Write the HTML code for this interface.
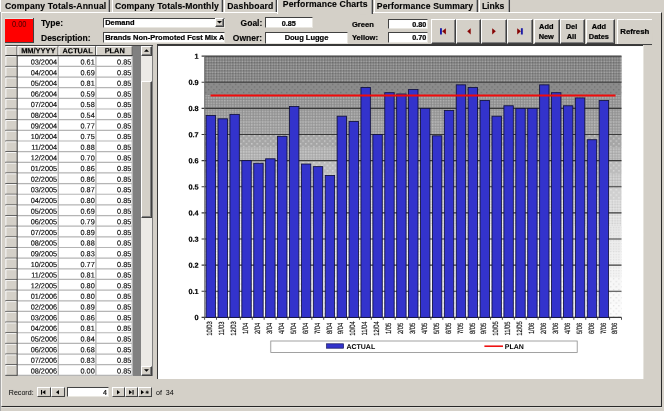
<!DOCTYPE html>
<html><head><meta charset="utf-8"><title>Performance Charts</title>
<style>
html,body{margin:0;padding:0;}
body{width:664px;height:411px;overflow:hidden;background:#d4d0c8;position:relative;font-family:"Liberation Sans",Arial,sans-serif;color:#000;}
.a{position:absolute;box-sizing:border-box;white-space:nowrap;}
.b{font-weight:bold;}
.btn,.fld,.lbl2{-webkit-text-stroke:0.22px #000;}
.lbl,.tab{-webkit-text-stroke:0.12px #000;}
.tab{position:absolute;box-sizing:border-box;top:-2px;height:14px;border-left:1px solid #fff;border-right:1px solid #404040;box-shadow:inset -1px 0 0 #a0a0a0;font-weight:bold;font-size:8.6px;letter-spacing:0.12px;line-height:10px;white-space:nowrap;}
.tab span{position:absolute;top:2.8px;}
.fld{position:absolute;box-sizing:border-box;background:#fff;border-top:1px solid #404040;border-left:1px solid #404040;border-bottom:1px solid #e8e6e0;border-right:1px solid #e8e6e0;font-weight:bold;font-size:7.45px;line-height:9px;white-space:nowrap;overflow:hidden;}
.btn{position:absolute;box-sizing:border-box;background:#d4d0c8;border-top:1px solid #fff;border-left:1px solid #fff;border-bottom:1px solid #404040;border-right:1px solid #404040;box-shadow:inset -1px -1px 0 #808080;font-weight:bold;font-size:7.4px;line-height:9.4px;text-align:center;white-space:nowrap;}
  .lbl{position:absolute;font-weight:bold;font-size:8.5px;line-height:10px;white-space:nowrap;}
.lbl2{position:absolute;font-weight:bold;font-size:7.55px;line-height:10px;white-space:nowrap;}
.hd{position:absolute;box-sizing:border-box;background:#d4d0c8;border-top:1px solid #fff;border-left:1px solid #fff;border-bottom:1px solid #404040;border-right:1px solid #808080;font-weight:bold;font-size:7.2px;line-height:8px;text-align:center;}
.c{position:absolute;box-sizing:border-box;background:#fff;border-right:1px solid #c0c0c0;border-bottom:1px solid #c0c0c0;font-size:7.1px;line-height:9.6px;text-align:right;padding-right:1px;color:#222;}
.rs{position:absolute;box-sizing:border-box;background:#d4d0c8;border-top:1px solid #fff;border-left:1px solid #fff;border-bottom:1px solid #808080;border-right:1px solid #404040;}
.nb{position:absolute;box-sizing:border-box;background:#d4d0c8;border-top:1px solid #fff;border-left:1px solid #fff;border-bottom:1px solid #404040;border-right:1px solid #404040;}
svg{position:absolute;overflow:visible;text-rendering:geometricPrecision;}
#r{position:absolute;left:0;top:0;width:664px;height:411px;transform:rotate(0.004deg);transform-origin:332px 205px;will-change:transform;}
</style></head><body><div id="r">

<div class="a" style="left:0;top:0;width:0.9px;height:411px;background:#a6a6a6;"></div>
<div class="a" style="left:0.8px;top:11.7px;width:661.3px;height:395.5px;border-top:1px solid #fff;border-left:1px solid #f4f2ee;border-right:1px solid #262626;border-bottom:1px solid #262626;"></div>
<div class="a" style="left:1px;top:407.4px;width:661px;height:1px;background:#e2e0da;"></div>
<div class="tab" style="left:0px;width:110px;letter-spacing:0.15px;"><span style="left:4.0px;">Company Totals-Annual</span></div>
<div class="tab" style="left:111.5px;width:111px;letter-spacing:0.08px;"><span style="left:2.5px;">Company Totals-Monthly</span></div>
<div class="tab" style="left:224px;width:53px;letter-spacing:0.16px;"><span style="left:2.2px;">Dashboard</span></div>
<div class="tab" style="left:277px;width:96px;top:-4px;height:18px;background:#d4d0c8;z-index:3;letter-spacing:0.15px;"><span style="left:4.8px;top:2.7px;">Performance Charts</span></div>
<div class="tab" style="left:374px;width:103.5px;letter-spacing:0.12px;"><span style="left:1.8px;">Performance Summary</span></div>
<div class="tab" style="left:479px;width:30.5px;letter-spacing:-0.02px;"><span style="left:1.9px;">Links</span></div>
<div class="a" style="left:4.8px;top:18.3px;width:29.5px;height:24.9px;background:#404040;"></div>
<div class="a" style="left:4.8px;top:18.3px;width:28.2px;height:23.7px;background:#ff0000;border-top:1px solid #dcecea;"></div>
<div class="a" style="left:4.8px;top:18.9px;width:28.4px;text-align:center;font-size:9.1px;line-height:10px;color:#480000;transform:scaleX(0.82);">0.00</div>
<div class="lbl" style="left:41px;top:17.6px;">Type:</div>
<div class="lbl" style="left:41px;top:32.6px;">Description:</div>
<div class="lbl" style="left:240.6px;top:17.6px;">Goal:</div>
<div class="lbl" style="left:232.8px;top:32.8px;">Owner:</div>
<div class="lbl2" style="left:352px;top:20.1px;">Green</div>
<div class="lbl2" style="left:352px;top:33.3px;">Yellow:</div>
<div class="fld" style="left:103px;top:17.5px;width:122px;height:10px;padding-left:1.2px;line-height:7.4px;">Demand</div>
<div class="btn" style="left:214.6px;top:18.2px;width:9.8px;height:8.8px;"></div>
<svg style="left:217px;top:21.2px" width="5" height="3" viewBox="0 0 5 3"><path d="M0 0H5L2.5 2.6Z" fill="#000"/></svg>
<div class="fld" style="left:103px;top:32px;width:122px;height:11px;padding-left:1.2px;line-height:9px;font-size:7.5px;">Brands Non-Promoted Fcst Mix A</div>
<div class="fld" style="left:265px;top:17.4px;width:47.6px;height:11px;text-align:center;font-size:7.2px;padding-top:0.4px;">0.85</div>
<div class="fld" style="left:265px;top:32px;width:83px;height:11.5px;text-align:center;font-size:7.5px;padding-top:0.2px;">Doug Lugge</div>
<div class="fld" style="left:388px;top:18.5px;width:40.3px;height:10.4px;text-align:right;font-size:7.2px;padding-right:1px;padding-top:0.2px;">0.80</div>
<div class="fld" style="left:388px;top:32.4px;width:40.3px;height:10.8px;text-align:right;font-size:7.2px;padding-right:1px;padding-top:0px;">0.70</div>
<div class="btn" style="left:431px;top:18.6px;width:25px;height:25.6px;"></div>
<div class="btn" style="left:456px;top:18.6px;width:25px;height:25.6px;"></div>
<div class="btn" style="left:481px;top:18.6px;width:26px;height:25.6px;"></div>
<div class="btn" style="left:507px;top:18.6px;width:25.5px;height:25.6px;"></div>
<svg style="left:440.4px;top:28px" width="7" height="7" viewBox="0 0 7 7"><rect x="0" y="0.2" width="1.9" height="6.3" fill="#1a1aa6"/><path d="M5.9 0.3V6.4L2.1 3.35Z" fill="#860404"/></svg>
<svg style="left:466.6px;top:28px" width="5" height="7" viewBox="0 0 5 7"><path d="M3.7 0.3V6.4L0.2 3.35Z" fill="#860404"/></svg>
<svg style="left:492.4px;top:28px" width="5" height="7" viewBox="0 0 5 7"><path d="M0.2 0.3V6.4L3.8 3.35Z" fill="#860404"/></svg>
<svg style="left:517.2px;top:28px" width="7" height="7" viewBox="0 0 7 7"><path d="M0.2 0.3V6.4L3.9 3.35Z" fill="#860404"/><rect x="3.9" y="0.2" width="1.9" height="6.3" fill="#1a1aa6"/></svg>
<div class="btn" style="left:534px;top:18.6px;width:25.5px;height:25.6px;padding-top:2.5px;padding-right:1px;">Add<br>New</div>
<div class="btn" style="left:560px;top:18.6px;width:25px;height:25.6px;padding-top:2.5px;padding-right:2px;">Del<br>All</div>
<div class="btn" style="left:586px;top:18.6px;width:28.8px;height:25.6px;padding-top:2.5px;padding-right:3px;">Add<br>Dates</div>
<div class="btn" style="left:616.6px;top:18.6px;width:35.4px;height:26.2px;padding-top:7.6px;font-size:7.8px;border-right:none;box-shadow:none;">Refresh</div>
<div class="a" style="left:4.6px;top:45.0px;width:148px;height:331.4px;background:#808080;border-top:1px solid #404040;border-left:1px solid #808080;"></div>
<svg style="left:0;top:0" width="160" height="380" viewBox="0 0 160 380" font-family="Liberation Sans, Arial, sans-serif">
<rect x="5.4" y="46.0" width="127.20" height="329.80" fill="#fff"/>
<rect x="5.4" y="46.0" width="12" height="329.80" fill="#d4d0c8"/>
<rect x="5.4" y="46.0" width="127.20" height="10.00" fill="#d4d0c8"/>
<path d="M5.9 55.5V46.5H16.9" fill="none" stroke="#fff" stroke-width="1"/>
<path d="M17.0 46.3V55.5" fill="none" stroke="#484848" stroke-width="1"/>
<path d="M17.9 55.5V46.5H57.9" fill="none" stroke="#fff" stroke-width="1"/>
<path d="M58.0 46.3V55.5" fill="none" stroke="#484848" stroke-width="1"/>
<path d="M58.9 55.5V46.5H95.5" fill="none" stroke="#fff" stroke-width="1"/>
<path d="M95.6 46.3V55.5" fill="none" stroke="#484848" stroke-width="1"/>
<path d="M96.5 55.5V46.5H132.1" fill="none" stroke="#fff" stroke-width="1"/>
<path d="M132.2 46.3V55.5" fill="none" stroke="#484848" stroke-width="1"/>
<line x1="5.4" y1="55.7" x2="132.6" y2="55.7" stroke="#303030" stroke-width="1.2"/>
<text transform="translate(38.30 53.2) rotate(0.03)" font-size="7.45" font-weight="bold" stroke="#000" stroke-width="0.15" text-anchor="middle">MM/YYYY</text>
<text transform="translate(77.60 53.2) rotate(0.03)" font-size="7.3" font-weight="bold" stroke="#000" stroke-width="0.15" text-anchor="middle">ACTUAL</text>
<text transform="translate(114.70 53.2) rotate(0.03)" font-size="7.4" font-weight="bold" stroke="#000" stroke-width="0.15" text-anchor="middle">PLAN</text>
<path d="M5.9 66.05V56.60H16.6" fill="none" stroke="#fff" stroke-width="0.9"/>
<line x1="5.4" y1="66.40" x2="17.4" y2="66.40" stroke="#4c4c4c" stroke-width="1"/>
<line x1="17.8" y1="66.40" x2="132.6" y2="66.40" stroke="#b4b4b4" stroke-width="1.2"/>
<text transform="translate(57.10 64.50) rotate(0.03)" font-size="7.3" fill="#000" stroke="#000" stroke-width="0.12" text-anchor="end">03/2004</text>
<text transform="translate(94.70 64.50) rotate(0.03)" font-size="7.3" fill="#000" stroke="#000" stroke-width="0.12" text-anchor="end">0.61</text>
<text transform="translate(131.30 64.50) rotate(0.03)" font-size="7.3" fill="#000" stroke="#000" stroke-width="0.12" text-anchor="end">0.85</text>
<path d="M5.9 76.71V67.25H16.6" fill="none" stroke="#fff" stroke-width="0.9"/>
<line x1="5.4" y1="77.06" x2="17.4" y2="77.06" stroke="#4c4c4c" stroke-width="1"/>
<line x1="17.8" y1="77.06" x2="132.6" y2="77.06" stroke="#b4b4b4" stroke-width="1.2"/>
<text transform="translate(57.10 75.15) rotate(0.03)" font-size="7.3" fill="#000" stroke="#000" stroke-width="0.12" text-anchor="end">04/2004</text>
<text transform="translate(94.70 75.15) rotate(0.03)" font-size="7.3" fill="#000" stroke="#000" stroke-width="0.12" text-anchor="end">0.69</text>
<text transform="translate(131.30 75.15) rotate(0.03)" font-size="7.3" fill="#000" stroke="#000" stroke-width="0.12" text-anchor="end">0.85</text>
<path d="M5.9 87.36V77.91H16.6" fill="none" stroke="#fff" stroke-width="0.9"/>
<line x1="5.4" y1="87.71" x2="17.4" y2="87.71" stroke="#4c4c4c" stroke-width="1"/>
<line x1="17.8" y1="87.71" x2="132.6" y2="87.71" stroke="#b4b4b4" stroke-width="1.2"/>
<text transform="translate(57.10 85.81) rotate(0.03)" font-size="7.3" fill="#000" stroke="#000" stroke-width="0.12" text-anchor="end">05/2004</text>
<text transform="translate(94.70 85.81) rotate(0.03)" font-size="7.3" fill="#000" stroke="#000" stroke-width="0.12" text-anchor="end">0.81</text>
<text transform="translate(131.30 85.81) rotate(0.03)" font-size="7.3" fill="#000" stroke="#000" stroke-width="0.12" text-anchor="end">0.85</text>
<path d="M5.9 98.01V88.56H16.6" fill="none" stroke="#fff" stroke-width="0.9"/>
<line x1="5.4" y1="98.36" x2="17.4" y2="98.36" stroke="#4c4c4c" stroke-width="1"/>
<line x1="17.8" y1="98.36" x2="132.6" y2="98.36" stroke="#b4b4b4" stroke-width="1.2"/>
<text transform="translate(57.10 96.46) rotate(0.03)" font-size="7.3" fill="#000" stroke="#000" stroke-width="0.12" text-anchor="end">06/2004</text>
<text transform="translate(94.70 96.46) rotate(0.03)" font-size="7.3" fill="#000" stroke="#000" stroke-width="0.12" text-anchor="end">0.59</text>
<text transform="translate(131.30 96.46) rotate(0.03)" font-size="7.3" fill="#000" stroke="#000" stroke-width="0.12" text-anchor="end">0.85</text>
<path d="M5.9 108.67V99.21H16.6" fill="none" stroke="#fff" stroke-width="0.9"/>
<line x1="5.4" y1="109.02" x2="17.4" y2="109.02" stroke="#4c4c4c" stroke-width="1"/>
<line x1="17.8" y1="109.02" x2="132.6" y2="109.02" stroke="#b4b4b4" stroke-width="1.2"/>
<text transform="translate(57.10 107.11) rotate(0.03)" font-size="7.3" fill="#000" stroke="#000" stroke-width="0.12" text-anchor="end">07/2004</text>
<text transform="translate(94.70 107.11) rotate(0.03)" font-size="7.3" fill="#000" stroke="#000" stroke-width="0.12" text-anchor="end">0.58</text>
<text transform="translate(131.30 107.11) rotate(0.03)" font-size="7.3" fill="#000" stroke="#000" stroke-width="0.12" text-anchor="end">0.85</text>
<path d="M5.9 119.32V109.87H16.6" fill="none" stroke="#fff" stroke-width="0.9"/>
<line x1="5.4" y1="119.67" x2="17.4" y2="119.67" stroke="#4c4c4c" stroke-width="1"/>
<line x1="17.8" y1="119.67" x2="132.6" y2="119.67" stroke="#b4b4b4" stroke-width="1.2"/>
<text transform="translate(57.10 117.77) rotate(0.03)" font-size="7.3" fill="#000" stroke="#000" stroke-width="0.12" text-anchor="end">08/2004</text>
<text transform="translate(94.70 117.77) rotate(0.03)" font-size="7.3" fill="#000" stroke="#000" stroke-width="0.12" text-anchor="end">0.54</text>
<text transform="translate(131.30 117.77) rotate(0.03)" font-size="7.3" fill="#000" stroke="#000" stroke-width="0.12" text-anchor="end">0.85</text>
<path d="M5.9 129.97V120.52H16.6" fill="none" stroke="#fff" stroke-width="0.9"/>
<line x1="5.4" y1="130.32" x2="17.4" y2="130.32" stroke="#4c4c4c" stroke-width="1"/>
<line x1="17.8" y1="130.32" x2="132.6" y2="130.32" stroke="#b4b4b4" stroke-width="1.2"/>
<text transform="translate(57.10 128.42) rotate(0.03)" font-size="7.3" fill="#000" stroke="#000" stroke-width="0.12" text-anchor="end">09/2004</text>
<text transform="translate(94.70 128.42) rotate(0.03)" font-size="7.3" fill="#000" stroke="#000" stroke-width="0.12" text-anchor="end">0.77</text>
<text transform="translate(131.30 128.42) rotate(0.03)" font-size="7.3" fill="#000" stroke="#000" stroke-width="0.12" text-anchor="end">0.85</text>
<path d="M5.9 140.63V131.17H16.6" fill="none" stroke="#fff" stroke-width="0.9"/>
<line x1="5.4" y1="140.98" x2="17.4" y2="140.98" stroke="#4c4c4c" stroke-width="1"/>
<line x1="17.8" y1="140.98" x2="132.6" y2="140.98" stroke="#b4b4b4" stroke-width="1.2"/>
<text transform="translate(57.10 139.07) rotate(0.03)" font-size="7.3" fill="#000" stroke="#000" stroke-width="0.12" text-anchor="end">10/2004</text>
<text transform="translate(94.70 139.07) rotate(0.03)" font-size="7.3" fill="#000" stroke="#000" stroke-width="0.12" text-anchor="end">0.75</text>
<text transform="translate(131.30 139.07) rotate(0.03)" font-size="7.3" fill="#000" stroke="#000" stroke-width="0.12" text-anchor="end">0.85</text>
<path d="M5.9 151.28V141.83H16.6" fill="none" stroke="#fff" stroke-width="0.9"/>
<line x1="5.4" y1="151.63" x2="17.4" y2="151.63" stroke="#4c4c4c" stroke-width="1"/>
<line x1="17.8" y1="151.63" x2="132.6" y2="151.63" stroke="#b4b4b4" stroke-width="1.2"/>
<text transform="translate(57.10 149.73) rotate(0.03)" font-size="7.3" fill="#000" stroke="#000" stroke-width="0.12" text-anchor="end">11/2004</text>
<text transform="translate(94.70 149.73) rotate(0.03)" font-size="7.3" fill="#000" stroke="#000" stroke-width="0.12" text-anchor="end">0.88</text>
<text transform="translate(131.30 149.73) rotate(0.03)" font-size="7.3" fill="#000" stroke="#000" stroke-width="0.12" text-anchor="end">0.85</text>
<path d="M5.9 161.93V152.48H16.6" fill="none" stroke="#fff" stroke-width="0.9"/>
<line x1="5.4" y1="162.28" x2="17.4" y2="162.28" stroke="#4c4c4c" stroke-width="1"/>
<line x1="17.8" y1="162.28" x2="132.6" y2="162.28" stroke="#b4b4b4" stroke-width="1.2"/>
<text transform="translate(57.10 160.38) rotate(0.03)" font-size="7.3" fill="#000" stroke="#000" stroke-width="0.12" text-anchor="end">12/2004</text>
<text transform="translate(94.70 160.38) rotate(0.03)" font-size="7.3" fill="#000" stroke="#000" stroke-width="0.12" text-anchor="end">0.70</text>
<text transform="translate(131.30 160.38) rotate(0.03)" font-size="7.3" fill="#000" stroke="#000" stroke-width="0.12" text-anchor="end">0.85</text>
<path d="M5.9 172.59V163.13H16.6" fill="none" stroke="#fff" stroke-width="0.9"/>
<line x1="5.4" y1="172.94" x2="17.4" y2="172.94" stroke="#4c4c4c" stroke-width="1"/>
<line x1="17.8" y1="172.94" x2="132.6" y2="172.94" stroke="#b4b4b4" stroke-width="1.2"/>
<text transform="translate(57.10 171.03) rotate(0.03)" font-size="7.3" fill="#000" stroke="#000" stroke-width="0.12" text-anchor="end">01/2005</text>
<text transform="translate(94.70 171.03) rotate(0.03)" font-size="7.3" fill="#000" stroke="#000" stroke-width="0.12" text-anchor="end">0.86</text>
<text transform="translate(131.30 171.03) rotate(0.03)" font-size="7.3" fill="#000" stroke="#000" stroke-width="0.12" text-anchor="end">0.85</text>
<path d="M5.9 183.24V173.79H16.6" fill="none" stroke="#fff" stroke-width="0.9"/>
<line x1="5.4" y1="183.59" x2="17.4" y2="183.59" stroke="#4c4c4c" stroke-width="1"/>
<line x1="17.8" y1="183.59" x2="132.6" y2="183.59" stroke="#b4b4b4" stroke-width="1.2"/>
<text transform="translate(57.10 181.69) rotate(0.03)" font-size="7.3" fill="#000" stroke="#000" stroke-width="0.12" text-anchor="end">02/2005</text>
<text transform="translate(94.70 181.69) rotate(0.03)" font-size="7.3" fill="#000" stroke="#000" stroke-width="0.12" text-anchor="end">0.86</text>
<text transform="translate(131.30 181.69) rotate(0.03)" font-size="7.3" fill="#000" stroke="#000" stroke-width="0.12" text-anchor="end">0.85</text>
<path d="M5.9 193.89V184.44H16.6" fill="none" stroke="#fff" stroke-width="0.9"/>
<line x1="5.4" y1="194.24" x2="17.4" y2="194.24" stroke="#4c4c4c" stroke-width="1"/>
<line x1="17.8" y1="194.24" x2="132.6" y2="194.24" stroke="#b4b4b4" stroke-width="1.2"/>
<text transform="translate(57.10 192.34) rotate(0.03)" font-size="7.3" fill="#000" stroke="#000" stroke-width="0.12" text-anchor="end">03/2005</text>
<text transform="translate(94.70 192.34) rotate(0.03)" font-size="7.3" fill="#000" stroke="#000" stroke-width="0.12" text-anchor="end">0.87</text>
<text transform="translate(131.30 192.34) rotate(0.03)" font-size="7.3" fill="#000" stroke="#000" stroke-width="0.12" text-anchor="end">0.85</text>
<path d="M5.9 204.55V195.09H16.6" fill="none" stroke="#fff" stroke-width="0.9"/>
<line x1="5.4" y1="204.90" x2="17.4" y2="204.90" stroke="#4c4c4c" stroke-width="1"/>
<line x1="17.8" y1="204.90" x2="132.6" y2="204.90" stroke="#b4b4b4" stroke-width="1.2"/>
<text transform="translate(57.10 202.99) rotate(0.03)" font-size="7.3" fill="#000" stroke="#000" stroke-width="0.12" text-anchor="end">04/2005</text>
<text transform="translate(94.70 202.99) rotate(0.03)" font-size="7.3" fill="#000" stroke="#000" stroke-width="0.12" text-anchor="end">0.80</text>
<text transform="translate(131.30 202.99) rotate(0.03)" font-size="7.3" fill="#000" stroke="#000" stroke-width="0.12" text-anchor="end">0.85</text>
<path d="M5.9 215.20V205.75H16.6" fill="none" stroke="#fff" stroke-width="0.9"/>
<line x1="5.4" y1="215.55" x2="17.4" y2="215.55" stroke="#4c4c4c" stroke-width="1"/>
<line x1="17.8" y1="215.55" x2="132.6" y2="215.55" stroke="#b4b4b4" stroke-width="1.2"/>
<text transform="translate(57.10 213.65) rotate(0.03)" font-size="7.3" fill="#000" stroke="#000" stroke-width="0.12" text-anchor="end">05/2005</text>
<text transform="translate(94.70 213.65) rotate(0.03)" font-size="7.3" fill="#000" stroke="#000" stroke-width="0.12" text-anchor="end">0.69</text>
<text transform="translate(131.30 213.65) rotate(0.03)" font-size="7.3" fill="#000" stroke="#000" stroke-width="0.12" text-anchor="end">0.85</text>
<path d="M5.9 225.85V216.40H16.6" fill="none" stroke="#fff" stroke-width="0.9"/>
<line x1="5.4" y1="226.20" x2="17.4" y2="226.20" stroke="#4c4c4c" stroke-width="1"/>
<line x1="17.8" y1="226.20" x2="132.6" y2="226.20" stroke="#b4b4b4" stroke-width="1.2"/>
<text transform="translate(57.10 224.30) rotate(0.03)" font-size="7.3" fill="#000" stroke="#000" stroke-width="0.12" text-anchor="end">06/2005</text>
<text transform="translate(94.70 224.30) rotate(0.03)" font-size="7.3" fill="#000" stroke="#000" stroke-width="0.12" text-anchor="end">0.79</text>
<text transform="translate(131.30 224.30) rotate(0.03)" font-size="7.3" fill="#000" stroke="#000" stroke-width="0.12" text-anchor="end">0.85</text>
<path d="M5.9 236.51V227.05H16.6" fill="none" stroke="#fff" stroke-width="0.9"/>
<line x1="5.4" y1="236.86" x2="17.4" y2="236.86" stroke="#4c4c4c" stroke-width="1"/>
<line x1="17.8" y1="236.86" x2="132.6" y2="236.86" stroke="#b4b4b4" stroke-width="1.2"/>
<text transform="translate(57.10 234.95) rotate(0.03)" font-size="7.3" fill="#000" stroke="#000" stroke-width="0.12" text-anchor="end">07/2005</text>
<text transform="translate(94.70 234.95) rotate(0.03)" font-size="7.3" fill="#000" stroke="#000" stroke-width="0.12" text-anchor="end">0.89</text>
<text transform="translate(131.30 234.95) rotate(0.03)" font-size="7.3" fill="#000" stroke="#000" stroke-width="0.12" text-anchor="end">0.85</text>
<path d="M5.9 247.16V237.71H16.6" fill="none" stroke="#fff" stroke-width="0.9"/>
<line x1="5.4" y1="247.51" x2="17.4" y2="247.51" stroke="#4c4c4c" stroke-width="1"/>
<line x1="17.8" y1="247.51" x2="132.6" y2="247.51" stroke="#b4b4b4" stroke-width="1.2"/>
<text transform="translate(57.10 245.61) rotate(0.03)" font-size="7.3" fill="#000" stroke="#000" stroke-width="0.12" text-anchor="end">08/2005</text>
<text transform="translate(94.70 245.61) rotate(0.03)" font-size="7.3" fill="#000" stroke="#000" stroke-width="0.12" text-anchor="end">0.88</text>
<text transform="translate(131.30 245.61) rotate(0.03)" font-size="7.3" fill="#000" stroke="#000" stroke-width="0.12" text-anchor="end">0.85</text>
<path d="M5.9 257.81V248.36H16.6" fill="none" stroke="#fff" stroke-width="0.9"/>
<line x1="5.4" y1="258.16" x2="17.4" y2="258.16" stroke="#4c4c4c" stroke-width="1"/>
<line x1="17.8" y1="258.16" x2="132.6" y2="258.16" stroke="#b4b4b4" stroke-width="1.2"/>
<text transform="translate(57.10 256.26) rotate(0.03)" font-size="7.3" fill="#000" stroke="#000" stroke-width="0.12" text-anchor="end">09/2005</text>
<text transform="translate(94.70 256.26) rotate(0.03)" font-size="7.3" fill="#000" stroke="#000" stroke-width="0.12" text-anchor="end">0.83</text>
<text transform="translate(131.30 256.26) rotate(0.03)" font-size="7.3" fill="#000" stroke="#000" stroke-width="0.12" text-anchor="end">0.85</text>
<path d="M5.9 268.47V259.01H16.6" fill="none" stroke="#fff" stroke-width="0.9"/>
<line x1="5.4" y1="268.82" x2="17.4" y2="268.82" stroke="#4c4c4c" stroke-width="1"/>
<line x1="17.8" y1="268.82" x2="132.6" y2="268.82" stroke="#b4b4b4" stroke-width="1.2"/>
<text transform="translate(57.10 266.91) rotate(0.03)" font-size="7.3" fill="#000" stroke="#000" stroke-width="0.12" text-anchor="end">10/2005</text>
<text transform="translate(94.70 266.91) rotate(0.03)" font-size="7.3" fill="#000" stroke="#000" stroke-width="0.12" text-anchor="end">0.77</text>
<text transform="translate(131.30 266.91) rotate(0.03)" font-size="7.3" fill="#000" stroke="#000" stroke-width="0.12" text-anchor="end">0.85</text>
<path d="M5.9 279.12V269.67H16.6" fill="none" stroke="#fff" stroke-width="0.9"/>
<line x1="5.4" y1="279.47" x2="17.4" y2="279.47" stroke="#4c4c4c" stroke-width="1"/>
<line x1="17.8" y1="279.47" x2="132.6" y2="279.47" stroke="#b4b4b4" stroke-width="1.2"/>
<text transform="translate(57.10 277.57) rotate(0.03)" font-size="7.3" fill="#000" stroke="#000" stroke-width="0.12" text-anchor="end">11/2005</text>
<text transform="translate(94.70 277.57) rotate(0.03)" font-size="7.3" fill="#000" stroke="#000" stroke-width="0.12" text-anchor="end">0.81</text>
<text transform="translate(131.30 277.57) rotate(0.03)" font-size="7.3" fill="#000" stroke="#000" stroke-width="0.12" text-anchor="end">0.85</text>
<path d="M5.9 289.77V280.32H16.6" fill="none" stroke="#fff" stroke-width="0.9"/>
<line x1="5.4" y1="290.12" x2="17.4" y2="290.12" stroke="#4c4c4c" stroke-width="1"/>
<line x1="17.8" y1="290.12" x2="132.6" y2="290.12" stroke="#b4b4b4" stroke-width="1.2"/>
<text transform="translate(57.10 288.22) rotate(0.03)" font-size="7.3" fill="#000" stroke="#000" stroke-width="0.12" text-anchor="end">12/2005</text>
<text transform="translate(94.70 288.22) rotate(0.03)" font-size="7.3" fill="#000" stroke="#000" stroke-width="0.12" text-anchor="end">0.80</text>
<text transform="translate(131.30 288.22) rotate(0.03)" font-size="7.3" fill="#000" stroke="#000" stroke-width="0.12" text-anchor="end">0.85</text>
<path d="M5.9 300.43V290.97H16.6" fill="none" stroke="#fff" stroke-width="0.9"/>
<line x1="5.4" y1="300.78" x2="17.4" y2="300.78" stroke="#4c4c4c" stroke-width="1"/>
<line x1="17.8" y1="300.78" x2="132.6" y2="300.78" stroke="#b4b4b4" stroke-width="1.2"/>
<text transform="translate(57.10 298.87) rotate(0.03)" font-size="7.3" fill="#000" stroke="#000" stroke-width="0.12" text-anchor="end">01/2006</text>
<text transform="translate(94.70 298.87) rotate(0.03)" font-size="7.3" fill="#000" stroke="#000" stroke-width="0.12" text-anchor="end">0.80</text>
<text transform="translate(131.30 298.87) rotate(0.03)" font-size="7.3" fill="#000" stroke="#000" stroke-width="0.12" text-anchor="end">0.85</text>
<path d="M5.9 311.08V301.63H16.6" fill="none" stroke="#fff" stroke-width="0.9"/>
<line x1="5.4" y1="311.43" x2="17.4" y2="311.43" stroke="#4c4c4c" stroke-width="1"/>
<line x1="17.8" y1="311.43" x2="132.6" y2="311.43" stroke="#b4b4b4" stroke-width="1.2"/>
<text transform="translate(57.10 309.53) rotate(0.03)" font-size="7.3" fill="#000" stroke="#000" stroke-width="0.12" text-anchor="end">02/2006</text>
<text transform="translate(94.70 309.53) rotate(0.03)" font-size="7.3" fill="#000" stroke="#000" stroke-width="0.12" text-anchor="end">0.89</text>
<text transform="translate(131.30 309.53) rotate(0.03)" font-size="7.3" fill="#000" stroke="#000" stroke-width="0.12" text-anchor="end">0.85</text>
<path d="M5.9 321.73V312.28H16.6" fill="none" stroke="#fff" stroke-width="0.9"/>
<line x1="5.4" y1="322.08" x2="17.4" y2="322.08" stroke="#4c4c4c" stroke-width="1"/>
<line x1="17.8" y1="322.08" x2="132.6" y2="322.08" stroke="#b4b4b4" stroke-width="1.2"/>
<text transform="translate(57.10 320.18) rotate(0.03)" font-size="7.3" fill="#000" stroke="#000" stroke-width="0.12" text-anchor="end">03/2006</text>
<text transform="translate(94.70 320.18) rotate(0.03)" font-size="7.3" fill="#000" stroke="#000" stroke-width="0.12" text-anchor="end">0.86</text>
<text transform="translate(131.30 320.18) rotate(0.03)" font-size="7.3" fill="#000" stroke="#000" stroke-width="0.12" text-anchor="end">0.85</text>
<path d="M5.9 332.39V322.93H16.6" fill="none" stroke="#fff" stroke-width="0.9"/>
<line x1="5.4" y1="332.74" x2="17.4" y2="332.74" stroke="#4c4c4c" stroke-width="1"/>
<line x1="17.8" y1="332.74" x2="132.6" y2="332.74" stroke="#b4b4b4" stroke-width="1.2"/>
<text transform="translate(57.10 330.83) rotate(0.03)" font-size="7.3" fill="#000" stroke="#000" stroke-width="0.12" text-anchor="end">04/2006</text>
<text transform="translate(94.70 330.83) rotate(0.03)" font-size="7.3" fill="#000" stroke="#000" stroke-width="0.12" text-anchor="end">0.81</text>
<text transform="translate(131.30 330.83) rotate(0.03)" font-size="7.3" fill="#000" stroke="#000" stroke-width="0.12" text-anchor="end">0.85</text>
<path d="M5.9 343.04V333.59H16.6" fill="none" stroke="#fff" stroke-width="0.9"/>
<line x1="5.4" y1="343.39" x2="17.4" y2="343.39" stroke="#4c4c4c" stroke-width="1"/>
<line x1="17.8" y1="343.39" x2="132.6" y2="343.39" stroke="#b4b4b4" stroke-width="1.2"/>
<text transform="translate(57.10 341.49) rotate(0.03)" font-size="7.3" fill="#000" stroke="#000" stroke-width="0.12" text-anchor="end">05/2006</text>
<text transform="translate(94.70 341.49) rotate(0.03)" font-size="7.3" fill="#000" stroke="#000" stroke-width="0.12" text-anchor="end">0.84</text>
<text transform="translate(131.30 341.49) rotate(0.03)" font-size="7.3" fill="#000" stroke="#000" stroke-width="0.12" text-anchor="end">0.85</text>
<path d="M5.9 353.69V344.24H16.6" fill="none" stroke="#fff" stroke-width="0.9"/>
<line x1="5.4" y1="354.04" x2="17.4" y2="354.04" stroke="#4c4c4c" stroke-width="1"/>
<line x1="17.8" y1="354.04" x2="132.6" y2="354.04" stroke="#b4b4b4" stroke-width="1.2"/>
<text transform="translate(57.10 352.14) rotate(0.03)" font-size="7.3" fill="#000" stroke="#000" stroke-width="0.12" text-anchor="end">06/2006</text>
<text transform="translate(94.70 352.14) rotate(0.03)" font-size="7.3" fill="#000" stroke="#000" stroke-width="0.12" text-anchor="end">0.68</text>
<text transform="translate(131.30 352.14) rotate(0.03)" font-size="7.3" fill="#000" stroke="#000" stroke-width="0.12" text-anchor="end">0.85</text>
<path d="M5.9 364.35V354.89H16.6" fill="none" stroke="#fff" stroke-width="0.9"/>
<line x1="5.4" y1="364.70" x2="17.4" y2="364.70" stroke="#4c4c4c" stroke-width="1"/>
<line x1="17.8" y1="364.70" x2="132.6" y2="364.70" stroke="#b4b4b4" stroke-width="1.2"/>
<text transform="translate(57.10 362.79) rotate(0.03)" font-size="7.3" fill="#000" stroke="#000" stroke-width="0.12" text-anchor="end">07/2006</text>
<text transform="translate(94.70 362.79) rotate(0.03)" font-size="7.3" fill="#000" stroke="#000" stroke-width="0.12" text-anchor="end">0.83</text>
<text transform="translate(131.30 362.79) rotate(0.03)" font-size="7.3" fill="#000" stroke="#000" stroke-width="0.12" text-anchor="end">0.85</text>
<path d="M5.9 375.00V365.55H16.6" fill="none" stroke="#fff" stroke-width="0.9"/>
<line x1="5.4" y1="375.35" x2="17.4" y2="375.35" stroke="#4c4c4c" stroke-width="1"/>
<line x1="17.8" y1="375.35" x2="132.6" y2="375.35" stroke="#b4b4b4" stroke-width="1.2"/>
<text transform="translate(57.10 373.45) rotate(0.03)" font-size="7.3" fill="#000" stroke="#000" stroke-width="0.12" text-anchor="end">08/2006</text>
<text transform="translate(94.70 373.45) rotate(0.03)" font-size="7.3" fill="#000" stroke="#000" stroke-width="0.12" text-anchor="end">0.00</text>
<text transform="translate(131.30 373.45) rotate(0.03)" font-size="7.3" fill="#000" stroke="#000" stroke-width="0.12" text-anchor="end">0.85</text>
<line x1="17.2" y1="56.0" x2="17.2" y2="375.8" stroke="#404040" stroke-width="1"/>
<line x1="58.3" y1="56.0" x2="58.3" y2="375.8" stroke="#b4b4b4" stroke-width="1.3"/>
<line x1="95.9" y1="56.0" x2="95.9" y2="375.8" stroke="#b4b4b4" stroke-width="1.3"/>
<line x1="132.3" y1="56.0" x2="132.3" y2="375.8" stroke="#b4b4b4" stroke-width="1.3"/>
</svg>
<div class="a" style="left:140.8px;top:45.8px;width:11.2px;height:330px;background:#eceae6;"></div>
<div class="btn" style="left:140.8px;top:45.8px;width:11.2px;height:10.2px;"></div>
<svg style="left:144.2px;top:49.4px" width="5" height="3" viewBox="0 0 5 3"><path d="M0 2.8H5L2.5 0.2Z" fill="#000"/></svg>
<div class="btn" style="left:140.8px;top:80.6px;width:11.2px;height:137px;"></div>
<div class="btn" style="left:140.8px;top:365.6px;width:11.2px;height:10.2px;"></div>
<svg style="left:144.2px;top:369.4px" width="5" height="3" viewBox="0 0 5 3"><path d="M0 0.2H5L2.5 2.8Z" fill="#000"/></svg>
<div class="a" style="left:8.8px;top:387.6px;font-size:7.1px;line-height:10px;">Record:</div>
<div class="nb" style="left:37.4px;top:387.3px;width:13.4px;height:10px;"></div>
<div class="nb" style="left:50.8px;top:387.3px;width:13.8px;height:10px;"></div>
<div class="fld" style="left:67.4px;top:387px;width:42px;height:10.4px;font-weight:normal;font-size:7.1px;text-align:right;padding-right:1.5px;padding-top:0.6px;color:#111;">4</div>
<div class="nb" style="left:112.2px;top:387.3px;width:12.8px;height:10px;"></div>
<div class="nb" style="left:125px;top:387.3px;width:13.2px;height:10px;"></div>
<div class="nb" style="left:138.2px;top:387.3px;width:13.6px;height:10px;"></div>
<svg style="left:41.4px;top:390.1px" width="7" height="6" viewBox="0 0 7 6"><rect x="0" y="0" width="1.1" height="4.6" fill="#000"/><path d="M4.4 0V4.6L1.4 2.3Z" fill="#000"/></svg>
<svg style="left:56px;top:390.1px" width="5" height="6" viewBox="0 0 5 6"><path d="M3 0V4.6L0 2.3Z" fill="#000"/></svg>
<svg style="left:117.4px;top:390.1px" width="5" height="6" viewBox="0 0 5 6"><path d="M0 0V4.6L3 2.3Z" fill="#000"/></svg>
<svg style="left:129px;top:390.1px" width="7" height="6" viewBox="0 0 7 6"><path d="M0 0V4.6L3 2.3Z" fill="#000"/><rect x="3.5" y="0" width="1.1" height="4.6" fill="#000"/></svg>
<svg style="left:140.8px;top:390.1px" width="10" height="6" viewBox="0 0 10 6"><path d="M0 0V4.6L3 2.3Z" fill="#000"/><path d="M6.2 0.6V4M4.6 2.3H7.8M5.1 1.2L7.3 3.4M7.3 1.2L5.1 3.4" stroke="#000" stroke-width="0.7" fill="none"/></svg>
<div class="a" style="left:156px;top:387.6px;font-size:7.1px;line-height:10px;">of&nbsp;&nbsp;34</div>
<div class="a" style="left:156.6px;top:44.0px;width:487.4px;height:335.4px;background:#e6e4de;"></div>
<div class="a" style="left:156.6px;top:44.0px;width:486.6px;height:334.6px;background:#383838;"></div>
<div class="a" style="left:157.7px;top:45.5px;width:485.3px;height:333.1px;background:#fff;"></div>
<div class="a" style="left:640px;top:44px;width:12px;height:1px;background:#404040;"></div>
<svg style="left:0;top:0" width="664" height="411" viewBox="0 0 664 411" font-family="Liberation Sans, Arial, sans-serif">
<defs>
<pattern id="d1" width="2.7" height="2.7" patternUnits="userSpaceOnUse"><rect x="0.2" y="0.2" width="1" height="1" fill="#303030" fill-opacity="0.55"/><rect x="1.55" y="1.55" width="1" height="1" fill="#e8e8e8" fill-opacity="0.5"/></pattern>
<pattern id="d2" width="5.4" height="5.4" patternUnits="userSpaceOnUse"><rect x="0.2" y="0.2" width="1" height="1" fill="#303030" fill-opacity="0.5"/><rect x="2.9" y="2.9" width="1" height="1" fill="#303030" fill-opacity="0.5"/></pattern>
<pattern id="d3" width="2.7" height="2.7" patternUnits="userSpaceOnUse"><rect x="0.2" y="0.2" width="1.1" height="1.1" fill="#ffffff" fill-opacity="0.55"/><rect x="1.55" y="1.55" width="1" height="1" fill="#606060" fill-opacity="0.22"/></pattern>
<pattern id="d4" width="5.4" height="5.4" patternUnits="userSpaceOnUse"><rect x="0.2" y="0.2" width="1.1" height="1.1" fill="#ffffff" fill-opacity="0.7"/><rect x="2.9" y="2.9" width="1.1" height="1.1" fill="#ffffff" fill-opacity="0.7"/></pattern>
<pattern id="d5" width="2.7" height="2.7" patternUnits="userSpaceOnUse"><rect x="0.2" y="0.2" width="1" height="1" fill="#909090" fill-opacity="0.35"/></pattern>
<pattern id="d6" width="5.4" height="5.4" patternUnits="userSpaceOnUse"><rect x="0.2" y="0.2" width="1" height="1" fill="#909090" fill-opacity="0.4"/><rect x="2.9" y="2.9" width="1" height="1" fill="#909090" fill-opacity="0.4"/></pattern>
</defs>
<rect x="204.6" y="56.10" width="416.90" height="13.36" fill="#878787"/>
<rect x="204.6" y="56.10" width="416.90" height="13.06" fill="url(#d1)"/>
<rect x="204.6" y="69.16" width="416.90" height="13.36" fill="#888888"/>
<rect x="204.6" y="69.16" width="416.90" height="13.06" fill="url(#d1)"/>
<rect x="204.6" y="82.23" width="416.90" height="13.36" fill="#8b8b8b"/>
<rect x="204.6" y="82.23" width="416.90" height="13.06" fill="url(#d2)"/>
<rect x="204.6" y="95.29" width="416.90" height="13.36" fill="#909090"/>
<rect x="204.6" y="95.29" width="416.90" height="13.06" fill="url(#d3)"/>
<rect x="204.6" y="108.36" width="416.90" height="13.36" fill="#969696"/>
<rect x="204.6" y="108.36" width="416.90" height="13.06" fill="url(#d3)"/>
<rect x="204.6" y="121.42" width="416.90" height="13.36" fill="#9c9c9c"/>
<rect x="204.6" y="121.42" width="416.90" height="13.06" fill="url(#d3)"/>
<rect x="204.6" y="134.49" width="416.90" height="13.36" fill="#a6a6a6"/>
<rect x="204.6" y="134.49" width="416.90" height="13.06" fill="url(#d4)"/>
<rect x="204.6" y="147.55" width="416.90" height="13.36" fill="#b0b0b0"/>
<rect x="204.6" y="147.55" width="416.90" height="13.06" fill="url(#d3)"/>
<rect x="204.6" y="160.62" width="416.90" height="13.37" fill="#bcbcbc"/>
<rect x="204.6" y="160.62" width="416.90" height="13.07" fill="url(#d4)"/>
<rect x="204.6" y="173.69" width="416.90" height="13.36" fill="#c6c6c6"/>
<rect x="204.6" y="173.69" width="416.90" height="13.06" fill="url(#d3)"/>
<rect x="204.6" y="186.75" width="416.90" height="13.36" fill="#d0d0d0"/>
<rect x="204.6" y="186.75" width="416.90" height="13.06" fill="url(#d4)"/>
<rect x="204.6" y="199.81" width="416.90" height="13.36" fill="#dadada"/>
<rect x="204.6" y="199.81" width="416.90" height="13.06" fill="url(#d3)"/>
<rect x="204.6" y="212.88" width="416.90" height="13.36" fill="#e1e1e1"/>
<rect x="204.6" y="212.88" width="416.90" height="13.06" fill="url(#d3)"/>
<rect x="204.6" y="225.94" width="416.90" height="13.36" fill="#e8e8e8"/>
<rect x="204.6" y="225.94" width="416.90" height="13.06" fill="url(#d5)"/>
<rect x="204.6" y="239.01" width="416.90" height="13.36" fill="#ededed"/>
<rect x="204.6" y="239.01" width="416.90" height="13.06" fill="url(#d5)"/>
<rect x="204.6" y="252.07" width="416.90" height="13.37" fill="#f1f1f1"/>
<rect x="204.6" y="252.07" width="416.90" height="13.07" fill="url(#d5)"/>
<rect x="204.6" y="265.14" width="416.90" height="13.36" fill="#f4f4f4"/>
<rect x="204.6" y="265.14" width="416.90" height="13.06" fill="url(#d5)"/>
<rect x="204.6" y="278.20" width="416.90" height="13.36" fill="#f7f7f7"/>
<rect x="204.6" y="278.20" width="416.90" height="13.06" fill="url(#d6)"/>
<rect x="204.6" y="291.27" width="416.90" height="13.36" fill="#f9f9f9"/>
<rect x="204.6" y="291.27" width="416.90" height="13.06" fill="url(#d6)"/>
<rect x="204.6" y="304.33" width="416.90" height="13.36" fill="#fbfbfb"/>
<rect x="204.6" y="304.33" width="416.90" height="13.06" fill="url(#d6)"/>
<line x1="201.6" y1="317.40" x2="621.5" y2="317.40" stroke="#383838" stroke-width="1.15"/>
<text transform="translate(198.6 320.05) rotate(0.03)" font-size="7.3" font-weight="bold" text-anchor="end" stroke="#000" stroke-width="0.2">0</text>
<line x1="201.6" y1="291.27" x2="621.5" y2="291.27" stroke="#383838" stroke-width="1.15"/>
<text transform="translate(198.6 293.92) rotate(0.03)" font-size="7.3" font-weight="bold" text-anchor="end" stroke="#000" stroke-width="0.2">0.1</text>
<line x1="201.6" y1="265.14" x2="621.5" y2="265.14" stroke="#383838" stroke-width="1.15"/>
<text transform="translate(198.6 267.79) rotate(0.03)" font-size="7.3" font-weight="bold" text-anchor="end" stroke="#000" stroke-width="0.2">0.2</text>
<line x1="201.6" y1="239.01" x2="621.5" y2="239.01" stroke="#383838" stroke-width="1.15"/>
<text transform="translate(198.6 241.66) rotate(0.03)" font-size="7.3" font-weight="bold" text-anchor="end" stroke="#000" stroke-width="0.2">0.3</text>
<line x1="201.6" y1="212.88" x2="621.5" y2="212.88" stroke="#383838" stroke-width="1.15"/>
<text transform="translate(198.6 215.53) rotate(0.03)" font-size="7.3" font-weight="bold" text-anchor="end" stroke="#000" stroke-width="0.2">0.4</text>
<line x1="201.6" y1="186.75" x2="621.5" y2="186.75" stroke="#383838" stroke-width="1.15"/>
<text transform="translate(198.6 189.40) rotate(0.03)" font-size="7.3" font-weight="bold" text-anchor="end" stroke="#000" stroke-width="0.2">0.5</text>
<line x1="201.6" y1="160.62" x2="621.5" y2="160.62" stroke="#383838" stroke-width="1.15"/>
<text transform="translate(198.6 163.27) rotate(0.03)" font-size="7.3" font-weight="bold" text-anchor="end" stroke="#000" stroke-width="0.2">0.6</text>
<line x1="201.6" y1="134.49" x2="621.5" y2="134.49" stroke="#383838" stroke-width="1.15"/>
<text transform="translate(198.6 137.14) rotate(0.03)" font-size="7.3" font-weight="bold" text-anchor="end" stroke="#000" stroke-width="0.2">0.7</text>
<line x1="201.6" y1="108.36" x2="621.5" y2="108.36" stroke="#383838" stroke-width="1.15"/>
<text transform="translate(198.6 111.01) rotate(0.03)" font-size="7.3" font-weight="bold" text-anchor="end" stroke="#000" stroke-width="0.2">0.8</text>
<line x1="201.6" y1="82.23" x2="621.5" y2="82.23" stroke="#383838" stroke-width="1.15"/>
<text transform="translate(198.6 84.88) rotate(0.03)" font-size="7.3" font-weight="bold" text-anchor="end" stroke="#000" stroke-width="0.2">0.9</text>
<line x1="201.6" y1="56.10" x2="621.5" y2="56.10" stroke="#383838" stroke-width="1.15"/>
<text transform="translate(198.6 58.75) rotate(0.03)" font-size="7.3" font-weight="bold" text-anchor="end" stroke="#000" stroke-width="0.2">1</text>
<line x1="204.79999999999998" y1="56.1" x2="204.79999999999998" y2="317.9" stroke="#6a6a6a" stroke-width="1.1"/>
<line x1="204.60" y1="317.4" x2="204.60" y2="319.79999999999995" stroke="#3a3a3a" stroke-width="0.9"/>
<rect x="206.10" y="115.42" width="9.41" height="201.98" fill="#3333cc" stroke="#10103c" stroke-width="0.85"/>
<text transform="translate(212.46,328.5) rotate(-90) scale(0.76,1)" font-size="7.6" text-anchor="middle" fill="#000" stroke="#000" stroke-width="0.15">10/03</text>
<line x1="216.51" y1="317.4" x2="216.51" y2="319.79999999999995" stroke="#3a3a3a" stroke-width="0.9"/>
<rect x="218.01" y="118.81" width="9.41" height="198.59" fill="#3333cc" stroke="#10103c" stroke-width="0.85"/>
<text transform="translate(224.37,328.5) rotate(-90) scale(0.76,1)" font-size="7.6" text-anchor="middle" fill="#000" stroke="#000" stroke-width="0.15">11/03</text>
<line x1="228.42" y1="317.4" x2="228.42" y2="319.79999999999995" stroke="#3a3a3a" stroke-width="0.9"/>
<rect x="229.92" y="114.37" width="9.41" height="203.03" fill="#3333cc" stroke="#10103c" stroke-width="0.85"/>
<text transform="translate(236.28,328.5) rotate(-90) scale(0.76,1)" font-size="7.6" text-anchor="middle" fill="#000" stroke="#000" stroke-width="0.15">12/03</text>
<line x1="240.33" y1="317.4" x2="240.33" y2="319.79999999999995" stroke="#3a3a3a" stroke-width="0.9"/>
<rect x="241.83" y="160.62" width="9.41" height="156.78" fill="#3333cc" stroke="#10103c" stroke-width="0.85"/>
<text transform="translate(248.19,328.5) rotate(-90) scale(0.76,1)" font-size="7.6" text-anchor="middle" fill="#000" stroke="#000" stroke-width="0.15">1/04</text>
<line x1="252.25" y1="317.4" x2="252.25" y2="319.79999999999995" stroke="#3a3a3a" stroke-width="0.9"/>
<rect x="253.75" y="163.23" width="9.41" height="154.17" fill="#3333cc" stroke="#10103c" stroke-width="0.85"/>
<text transform="translate(260.10,328.5) rotate(-90) scale(0.76,1)" font-size="7.6" text-anchor="middle" fill="#000" stroke="#000" stroke-width="0.15">2/04</text>
<line x1="264.16" y1="317.4" x2="264.16" y2="319.79999999999995" stroke="#3a3a3a" stroke-width="0.9"/>
<rect x="265.66" y="158.79" width="9.41" height="158.61" fill="#3333cc" stroke="#10103c" stroke-width="0.85"/>
<text transform="translate(272.01,328.5) rotate(-90) scale(0.76,1)" font-size="7.6" text-anchor="middle" fill="#000" stroke="#000" stroke-width="0.15">3/04</text>
<line x1="276.07" y1="317.4" x2="276.07" y2="319.79999999999995" stroke="#3a3a3a" stroke-width="0.9"/>
<rect x="277.57" y="136.32" width="9.41" height="181.08" fill="#3333cc" stroke="#10103c" stroke-width="0.85"/>
<text transform="translate(283.92,328.5) rotate(-90) scale(0.76,1)" font-size="7.6" text-anchor="middle" fill="#000" stroke="#000" stroke-width="0.15">4/04</text>
<line x1="287.98" y1="317.4" x2="287.98" y2="319.79999999999995" stroke="#3a3a3a" stroke-width="0.9"/>
<rect x="289.48" y="106.53" width="9.41" height="210.87" fill="#3333cc" stroke="#10103c" stroke-width="0.85"/>
<text transform="translate(295.84,328.5) rotate(-90) scale(0.76,1)" font-size="7.6" text-anchor="middle" fill="#000" stroke="#000" stroke-width="0.15">5/04</text>
<line x1="299.89" y1="317.4" x2="299.89" y2="319.79999999999995" stroke="#3a3a3a" stroke-width="0.9"/>
<rect x="301.39" y="164.02" width="9.41" height="153.38" fill="#3333cc" stroke="#10103c" stroke-width="0.85"/>
<text transform="translate(307.75,328.5) rotate(-90) scale(0.76,1)" font-size="7.6" text-anchor="middle" fill="#000" stroke="#000" stroke-width="0.15">6/04</text>
<line x1="311.80" y1="317.4" x2="311.80" y2="319.79999999999995" stroke="#3a3a3a" stroke-width="0.9"/>
<rect x="313.30" y="166.63" width="9.41" height="150.77" fill="#3333cc" stroke="#10103c" stroke-width="0.85"/>
<text transform="translate(319.66,328.5) rotate(-90) scale(0.76,1)" font-size="7.6" text-anchor="middle" fill="#000" stroke="#000" stroke-width="0.15">7/04</text>
<line x1="323.71" y1="317.4" x2="323.71" y2="319.79999999999995" stroke="#3a3a3a" stroke-width="0.9"/>
<rect x="325.21" y="175.51" width="9.41" height="141.89" fill="#3333cc" stroke="#10103c" stroke-width="0.85"/>
<text transform="translate(331.57,328.5) rotate(-90) scale(0.76,1)" font-size="7.6" text-anchor="middle" fill="#000" stroke="#000" stroke-width="0.15">8/04</text>
<line x1="335.63" y1="317.4" x2="335.63" y2="319.79999999999995" stroke="#3a3a3a" stroke-width="0.9"/>
<rect x="337.13" y="116.20" width="9.41" height="201.20" fill="#3333cc" stroke="#10103c" stroke-width="0.85"/>
<text transform="translate(343.48,328.5) rotate(-90) scale(0.76,1)" font-size="7.6" text-anchor="middle" fill="#000" stroke="#000" stroke-width="0.15">9/04</text>
<line x1="347.54" y1="317.4" x2="347.54" y2="319.79999999999995" stroke="#3a3a3a" stroke-width="0.9"/>
<rect x="349.04" y="121.43" width="9.41" height="195.97" fill="#3333cc" stroke="#10103c" stroke-width="0.85"/>
<text transform="translate(355.39,328.5) rotate(-90) scale(0.76,1)" font-size="7.6" text-anchor="middle" fill="#000" stroke="#000" stroke-width="0.15">10/04</text>
<line x1="359.45" y1="317.4" x2="359.45" y2="319.79999999999995" stroke="#3a3a3a" stroke-width="0.9"/>
<rect x="360.95" y="87.46" width="9.41" height="229.94" fill="#3333cc" stroke="#10103c" stroke-width="0.85"/>
<text transform="translate(367.30,328.5) rotate(-90) scale(0.76,1)" font-size="7.6" text-anchor="middle" fill="#000" stroke="#000" stroke-width="0.15">11/04</text>
<line x1="371.36" y1="317.4" x2="371.36" y2="319.79999999999995" stroke="#3a3a3a" stroke-width="0.9"/>
<rect x="372.86" y="134.49" width="9.41" height="182.91" fill="#3333cc" stroke="#10103c" stroke-width="0.85"/>
<text transform="translate(379.22,328.5) rotate(-90) scale(0.76,1)" font-size="7.6" text-anchor="middle" fill="#000" stroke="#000" stroke-width="0.15">12/04</text>
<line x1="383.27" y1="317.4" x2="383.27" y2="319.79999999999995" stroke="#3a3a3a" stroke-width="0.9"/>
<rect x="384.77" y="92.68" width="9.41" height="224.72" fill="#3333cc" stroke="#10103c" stroke-width="0.85"/>
<text transform="translate(391.13,328.5) rotate(-90) scale(0.76,1)" font-size="7.6" text-anchor="middle" fill="#000" stroke="#000" stroke-width="0.15">1/05</text>
<line x1="395.18" y1="317.4" x2="395.18" y2="319.79999999999995" stroke="#3a3a3a" stroke-width="0.9"/>
<rect x="396.68" y="93.99" width="9.41" height="223.41" fill="#3333cc" stroke="#10103c" stroke-width="0.85"/>
<text transform="translate(403.04,328.5) rotate(-90) scale(0.76,1)" font-size="7.6" text-anchor="middle" fill="#000" stroke="#000" stroke-width="0.15">2/05</text>
<line x1="407.09" y1="317.4" x2="407.09" y2="319.79999999999995" stroke="#3a3a3a" stroke-width="0.9"/>
<rect x="408.59" y="89.55" width="9.41" height="227.85" fill="#3333cc" stroke="#10103c" stroke-width="0.85"/>
<text transform="translate(414.95,328.5) rotate(-90) scale(0.76,1)" font-size="7.6" text-anchor="middle" fill="#000" stroke="#000" stroke-width="0.15">3/05</text>
<line x1="419.01" y1="317.4" x2="419.01" y2="319.79999999999995" stroke="#3a3a3a" stroke-width="0.9"/>
<rect x="420.51" y="108.36" width="9.41" height="209.04" fill="#3333cc" stroke="#10103c" stroke-width="0.85"/>
<text transform="translate(426.86,328.5) rotate(-90) scale(0.76,1)" font-size="7.6" text-anchor="middle" fill="#000" stroke="#000" stroke-width="0.15">4/05</text>
<line x1="430.92" y1="317.4" x2="430.92" y2="319.79999999999995" stroke="#3a3a3a" stroke-width="0.9"/>
<rect x="432.42" y="135.80" width="9.41" height="181.60" fill="#3333cc" stroke="#10103c" stroke-width="0.85"/>
<text transform="translate(438.77,328.5) rotate(-90) scale(0.76,1)" font-size="7.6" text-anchor="middle" fill="#000" stroke="#000" stroke-width="0.15">5/05</text>
<line x1="442.83" y1="317.4" x2="442.83" y2="319.79999999999995" stroke="#3a3a3a" stroke-width="0.9"/>
<rect x="444.33" y="110.45" width="9.41" height="206.95" fill="#3333cc" stroke="#10103c" stroke-width="0.85"/>
<text transform="translate(450.68,328.5) rotate(-90) scale(0.76,1)" font-size="7.6" text-anchor="middle" fill="#000" stroke="#000" stroke-width="0.15">6/05</text>
<line x1="454.74" y1="317.4" x2="454.74" y2="319.79999999999995" stroke="#3a3a3a" stroke-width="0.9"/>
<rect x="456.24" y="84.84" width="9.41" height="232.56" fill="#3333cc" stroke="#10103c" stroke-width="0.85"/>
<text transform="translate(462.60,328.5) rotate(-90) scale(0.76,1)" font-size="7.6" text-anchor="middle" fill="#000" stroke="#000" stroke-width="0.15">7/05</text>
<line x1="466.65" y1="317.4" x2="466.65" y2="319.79999999999995" stroke="#3a3a3a" stroke-width="0.9"/>
<rect x="468.15" y="87.46" width="9.41" height="229.94" fill="#3333cc" stroke="#10103c" stroke-width="0.85"/>
<text transform="translate(474.51,328.5) rotate(-90) scale(0.76,1)" font-size="7.6" text-anchor="middle" fill="#000" stroke="#000" stroke-width="0.15">8/05</text>
<line x1="478.56" y1="317.4" x2="478.56" y2="319.79999999999995" stroke="#3a3a3a" stroke-width="0.9"/>
<rect x="480.06" y="100.52" width="9.41" height="216.88" fill="#3333cc" stroke="#10103c" stroke-width="0.85"/>
<text transform="translate(486.42,328.5) rotate(-90) scale(0.76,1)" font-size="7.6" text-anchor="middle" fill="#000" stroke="#000" stroke-width="0.15">9/05</text>
<line x1="490.47" y1="317.4" x2="490.47" y2="319.79999999999995" stroke="#3a3a3a" stroke-width="0.9"/>
<rect x="491.97" y="116.20" width="9.41" height="201.20" fill="#3333cc" stroke="#10103c" stroke-width="0.85"/>
<text transform="translate(498.33,328.5) rotate(-90) scale(0.76,1)" font-size="7.6" text-anchor="middle" fill="#000" stroke="#000" stroke-width="0.15">10/05</text>
<line x1="502.39" y1="317.4" x2="502.39" y2="319.79999999999995" stroke="#3a3a3a" stroke-width="0.9"/>
<rect x="503.89" y="105.75" width="9.41" height="211.65" fill="#3333cc" stroke="#10103c" stroke-width="0.85"/>
<text transform="translate(510.24,328.5) rotate(-90) scale(0.76,1)" font-size="7.6" text-anchor="middle" fill="#000" stroke="#000" stroke-width="0.15">11/05</text>
<line x1="514.30" y1="317.4" x2="514.30" y2="319.79999999999995" stroke="#3a3a3a" stroke-width="0.9"/>
<rect x="515.80" y="108.36" width="9.41" height="209.04" fill="#3333cc" stroke="#10103c" stroke-width="0.85"/>
<text transform="translate(522.15,328.5) rotate(-90) scale(0.76,1)" font-size="7.6" text-anchor="middle" fill="#000" stroke="#000" stroke-width="0.15">12/05</text>
<line x1="526.21" y1="317.4" x2="526.21" y2="319.79999999999995" stroke="#3a3a3a" stroke-width="0.9"/>
<rect x="527.71" y="108.36" width="9.41" height="209.04" fill="#3333cc" stroke="#10103c" stroke-width="0.85"/>
<text transform="translate(534.06,328.5) rotate(-90) scale(0.76,1)" font-size="7.6" text-anchor="middle" fill="#000" stroke="#000" stroke-width="0.15">1/06</text>
<line x1="538.12" y1="317.4" x2="538.12" y2="319.79999999999995" stroke="#3a3a3a" stroke-width="0.9"/>
<rect x="539.62" y="84.84" width="9.41" height="232.56" fill="#3333cc" stroke="#10103c" stroke-width="0.85"/>
<text transform="translate(545.98,328.5) rotate(-90) scale(0.76,1)" font-size="7.6" text-anchor="middle" fill="#000" stroke="#000" stroke-width="0.15">2/06</text>
<line x1="550.03" y1="317.4" x2="550.03" y2="319.79999999999995" stroke="#3a3a3a" stroke-width="0.9"/>
<rect x="551.53" y="92.68" width="9.41" height="224.72" fill="#3333cc" stroke="#10103c" stroke-width="0.85"/>
<text transform="translate(557.89,328.5) rotate(-90) scale(0.76,1)" font-size="7.6" text-anchor="middle" fill="#000" stroke="#000" stroke-width="0.15">3/06</text>
<line x1="561.94" y1="317.4" x2="561.94" y2="319.79999999999995" stroke="#3a3a3a" stroke-width="0.9"/>
<rect x="563.44" y="105.75" width="9.41" height="211.65" fill="#3333cc" stroke="#10103c" stroke-width="0.85"/>
<text transform="translate(569.80,328.5) rotate(-90) scale(0.76,1)" font-size="7.6" text-anchor="middle" fill="#000" stroke="#000" stroke-width="0.15">4/06</text>
<line x1="573.85" y1="317.4" x2="573.85" y2="319.79999999999995" stroke="#3a3a3a" stroke-width="0.9"/>
<rect x="575.35" y="97.91" width="9.41" height="219.49" fill="#3333cc" stroke="#10103c" stroke-width="0.85"/>
<text transform="translate(581.71,328.5) rotate(-90) scale(0.76,1)" font-size="7.6" text-anchor="middle" fill="#000" stroke="#000" stroke-width="0.15">5/06</text>
<line x1="585.77" y1="317.4" x2="585.77" y2="319.79999999999995" stroke="#3a3a3a" stroke-width="0.9"/>
<rect x="587.27" y="139.72" width="9.41" height="177.68" fill="#3333cc" stroke="#10103c" stroke-width="0.85"/>
<text transform="translate(593.62,328.5) rotate(-90) scale(0.76,1)" font-size="7.6" text-anchor="middle" fill="#000" stroke="#000" stroke-width="0.15">6/06</text>
<line x1="597.68" y1="317.4" x2="597.68" y2="319.79999999999995" stroke="#3a3a3a" stroke-width="0.9"/>
<rect x="599.18" y="100.52" width="9.41" height="216.88" fill="#3333cc" stroke="#10103c" stroke-width="0.85"/>
<text transform="translate(605.53,328.5) rotate(-90) scale(0.76,1)" font-size="7.6" text-anchor="middle" fill="#000" stroke="#000" stroke-width="0.15">7/06</text>
<line x1="609.59" y1="317.4" x2="609.59" y2="319.79999999999995" stroke="#3a3a3a" stroke-width="0.9"/>
<text transform="translate(617.44,328.5) rotate(-90) scale(0.76,1)" font-size="7.6" text-anchor="middle" fill="#000" stroke="#000" stroke-width="0.15">8/06</text>
<line x1="621.50" y1="317.4" x2="621.50" y2="319.79999999999995" stroke="#3a3a3a" stroke-width="0.9"/>
<line x1="210.56" y1="95.45" x2="615.54" y2="95.45" stroke="#f20a0a" stroke-width="2.1"/>
<rect x="270.8" y="341" width="306.4" height="11.4" fill="#fff" stroke="#8a8a8a" stroke-width="0.8"/>
<rect x="326.6" y="343.8" width="17" height="4.4" fill="#3333cc" stroke="#15155a" stroke-width="0.7"/>
<text x="346.4" y="348.5" font-size="7" font-weight="bold">ACTUAL</text>
<line x1="484.4" y1="346.2" x2="503" y2="346.2" stroke="#ee1111" stroke-width="1.6"/>
<text x="504.8" y="348.5" font-size="7" font-weight="bold">PLAN</text>
</svg>
</div></body></html>
